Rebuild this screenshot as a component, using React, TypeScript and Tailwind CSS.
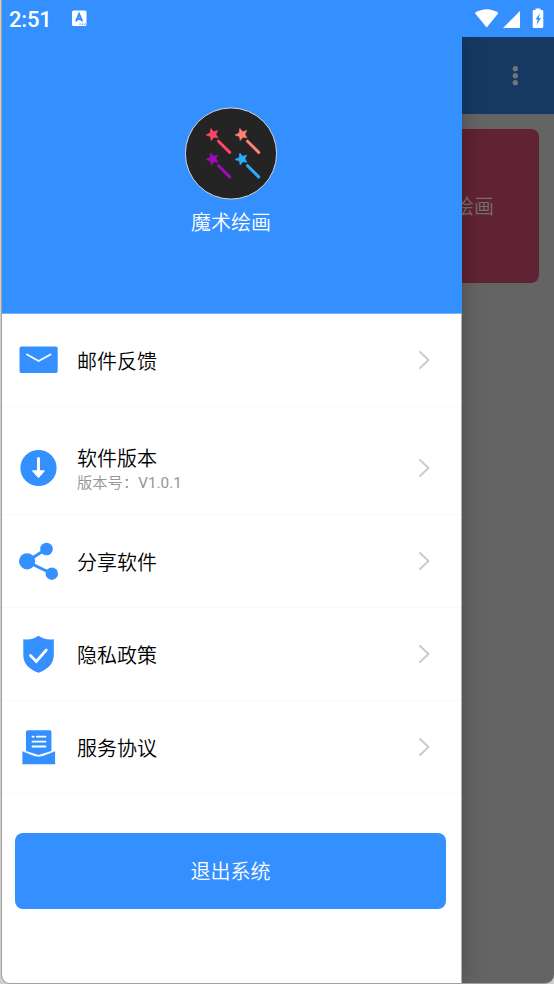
import type { ReactNode } from "react";

const BLUE = "#348fff";

function StatusBar() {
  return (
    <div className="flex h-[37px] shrink-0 items-center bg-[#348fff] text-white">
      <span className="ml-[7px] w-[62px] pt-[3px] font-[Roboto] text-[22px] leading-none font-medium tracking-[-0.2px]">2:51</span>
      <svg width="16" height="17" viewBox="0 0 16 17" className="ml-px">
        <rect x="0" y="0.5" width="14.500" height="15.500" rx="1.500" fill="#fff" />
        <path d="M4 11.300 7.100 4 10.200 11.300M5 9h4.200" fill="none" stroke={BLUE} strokeWidth="2" />
        <path d="M7.500 14.200h1.200M10 14.200h1.200M12.400 14.200h1.200" stroke={BLUE} strokeWidth="1.200" />
      </svg>
      <svg width="72" height="22" viewBox="0 0 72 22" className="ml-auto mr-[8px]" fill="#fff">
        <path d="M.8 5Q12.600-2.500 24.500 5L12.700 19.500Z" />
        <path d="M46 3v17H29Z" />
        <path d="M61.500 2V.5h5V2H68q1.300 0 1.300 1.300V18.700Q69.300 20 68 20h-8q-1.300 0-1.300-1.300V3.300Q58.700 2 60 2Z" />
        <path d="M66 5 61.500 11.500h2.200L62.500 17 67 10h-2.300Z" fill={BLUE} />
      </svg>
    </div>
  );
}

function AppPage() {
  return (
    <div className="flex flex-1 flex-col bg-[#646464]">
      <div className="flex h-[77px] items-center justify-end bg-[#153963]">
        <svg width="6" height="20" viewBox="0 0 6 20" className="mr-[36px]" fill="#747474">
          <circle cx="3.300" cy="2.700" r="2.600" />
          <circle cx="3.300" cy="9.700" r="2.600" />
          <circle cx="3.300" cy="16.700" r="2.600" />
        </svg>
      </div>
      <div className="mt-[15px] mr-[15px] ml-[15px] flex h-[154px] items-center justify-end rounded-[8px] bg-[#602333] pt-[2px] pr-[45px] text-[20px] text-[#747070]">
        魔术绘画
      </div>
    </div>
  );
}

function Wand({ x, y, color }: { x: number; y: number; color: string }) {
  return (
    <g transform={`translate(${x} ${y})`}>
      <path
        d="M4.800 0 7.600 3.300 11.700 2 9.900 5.800 12 9.300 7.900 8.700 5.200 12 4.400 8 0 6.500 4.200 4.600Z"
        fill={color}
        stroke={color}
        strokeWidth="0.600"
      />
      <path d="m12.500 12.700 11.200 11.200" stroke={color} strokeWidth="3" strokeLinecap="round" />
    </g>
  );
}

function Profile() {
  return (
    <div className="flex h-[277px] w-[460px] shrink-0 flex-col items-center border-b border-[#75b3ff] bg-[#348fff] pt-[70px] pr-px text-white">
      <svg width="93" height="94" viewBox="0 0 93 94">
        <circle cx="46" cy="46.500" r="45.600" fill="#242424" stroke="#d5dbe2" strokeWidth="1" />
        <Wand x={21} y={21.500} color="#ff4668" />
        <Wand x={50} y={21.500} color="#ff8370" />
        <Wand x={21} y={46} color="#a20abc" />
        <Wand x={50} y={46} color="#2badff" />
      </svg>
      <div className="mt-[7px] mr-px text-[20px] leading-[30px]">魔术绘画</div>
    </div>
  );
}

function MailIcon() {
  return (
    <svg width="40" height="40" viewBox="0 0 40 40">
      <rect x="1.500" y="6.500" width="38.200" height="26.500" rx="2" fill={BLUE} />
      <path d="m9 14.500 11.700 6.500 11.800-6.500" fill="none" stroke="#fff" strokeWidth="1.800" strokeLinecap="round" />
    </svg>
  );
}

function DownloadIcon() {
  return (
    <svg width="40" height="40" viewBox="0 0 40 40">
      <circle cx="20.500" cy="20" r="18.100" fill={BLUE} />
      <path d="M20.500 10.500v14" stroke="#fff" strokeWidth="3" strokeLinecap="round" />
      <path d="M14.500 22.800h12L20.500 29.700Z" fill="#fff" stroke="#fff" strokeWidth="1" strokeLinejoin="round" />
    </svg>
  );
}

function ShareIcon() {
  return (
    <svg width="40" height="40" viewBox="0 0 40 40" fill={BLUE}>
      <path d="M28.500 7.700 9 20.500l24.500 12" fill="none" stroke={BLUE} strokeWidth="3" />
      <circle cx="9.100" cy="20.300" r="8.100" />
      <circle cx="28.500" cy="8" r="6.300" />
      <circle cx="33.800" cy="32.700" r="6.200" />
    </svg>
  );
}

function ShieldIcon() {
  return (
    <svg width="40" height="40" viewBox="0 0 40 40">
      <path
        d="M20.500 1.800Q27 6.500 35.800 5.200V21C35.800 30 29.500 35.500 20.500 38.700 11.300 35.500 5.300 30 5.300 21V5.200Q14 6.500 20.500 1.800Z"
        fill={BLUE}
      />
      <path d="m12.500 21.500 5.800 6 10-11.500" fill="none" stroke="#fff" strokeWidth="2.700" strokeLinecap="round" />
    </svg>
  );
}

function AgreementIcon() {
  return (
    <svg width="40" height="40" viewBox="0 0 40 40">
      <path d="M9.700 3.300h22q1.700 0 1.700 1.700v19L20.500 28 8 24V5q0-1.700 1.700-1.700Z" fill={BLUE} />
      <path
        d="M4 23.700 16 28.500q4.600 1.500 9 0L37.500 23.700V36.500q0 1.200-1.200 1.200H5.200Q4 37.700 4 36.500Z"
        fill={BLUE}
        stroke="#fff"
        strokeWidth="0.800"
      />
      <path d="M14.500 9.700h1.200M18.800 9.700h8.700M14.500 14.700h13M14.500 19.500h13" stroke="#fff" strokeWidth="1.800" strokeLinecap="round" />
    </svg>
  );
}

function MenuRow({ icon, label, detail }: { icon: ReactNode; label: string; detail?: string }) {
  return (
    <div
      className={`flex shrink-0 items-center border-b border-[#f8f8f8] pl-4 pr-[30px] ${
        detail ? "h-[108px] pt-[1px]" : "h-[93px]"
      }`}
    >
      {detail ? <div className="pt-[14px]">{icon}</div> : icon}
      <div className={`ml-[19px] flex-1 text-[20px] leading-[28px] text-black ${detail ? "pt-[15px]" : "pt-[3px]"}`}>
        <div>{label}</div>
        {detail && (
          <div className="text-[15.300px] leading-[20px] text-[#959595]">
            版本号：<span className="font-normal">{detail}</span>
          </div>
        )}
      </div>
      <svg
        width="14"
        height="20"
        viewBox="0 0 14 20"
        fill="none"
        stroke="#cbcbcb"
        strokeWidth="2"
        className={detail ? "mt-[14px]" : ""}
      >
        <path d="m3 2 8.500 8-8.500 8" strokeLinecap="round" strokeLinejoin="round" />
      </svg>
    </div>
  );
}

function Drawer() {
  return (
    <aside className="absolute inset-y-0 left-0 flex w-[459px] flex-col bg-white shadow-[1px_0_0_#b0b0b0,3px_0_18px_rgba(0,0,0,0.22)]">
      <Profile />
      <MenuRow icon={<MailIcon />} label="邮件反馈" />
      <MenuRow icon={<DownloadIcon />} label="软件版本" detail="V1.0.1" />
      <MenuRow icon={<ShareIcon />} label="分享软件" />
      <MenuRow icon={<ShieldIcon />} label="隐私政策" />
      <MenuRow icon={<AgreementIcon />} label="服务协议" />
      <button className="mx-[13px] mt-[39px] h-[76px] w-[431px] shrink-0 rounded-[8px] bg-[#348fff] pt-[2px] text-[20px] text-white">
        退出系统
      </button>
    </aside>
  );
}

export default function App() {
  return (
    <div className="h-[984px] w-[554px] overflow-hidden bg-[#cfcfcf] pl-px font-[Roboto,'Noto_Sans_CJK_SC',sans-serif] font-[350]">
      <div className="flex h-[984px] flex-col overflow-hidden rounded-b-[9px] border-b border-l border-[#a0a0a0]">
        <StatusBar />
        <main className="relative flex flex-1 overflow-hidden">
          <AppPage />
          <Drawer />
        </main>
      </div>
    </div>
  );
}
